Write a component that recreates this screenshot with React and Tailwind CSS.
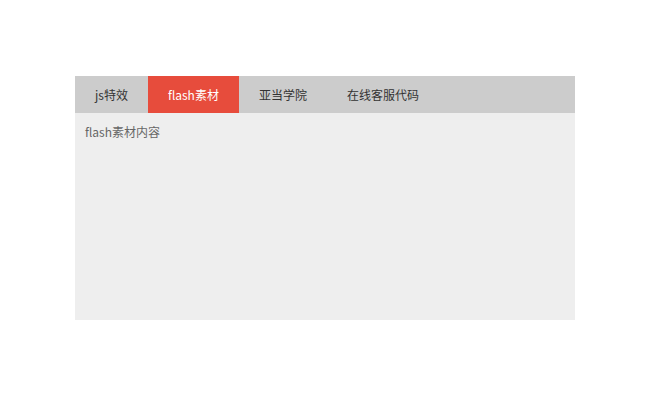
import { useState } from 'react';

const TABS = [
  { id: 'js', label: 'js特效', content: 'js特效内容' },
  { id: 'flash', label: 'flash素材', content: 'flash素材内容' },
  { id: 'adam', label: '亚当学院', content: '亚当学院内容' },
  { id: 'kefu', label: '在线客服代码', content: '在线客服代码内容' },
];

export default function App() {
  const [active, setActive] = useState('flash');
  const current = TABS.find((t) => t.id === active);

  return (
    <div
      className="w-[650px] h-[412px] bg-white pt-[76px] pl-[75px]"
      style={{ fontFamily: '"Microsoft YaHei", "Noto Sans CJK SC", sans-serif' }}
    >
      <div className="w-[500px]">
        <ul className="flex h-[37px] bg-[#cccccc]">
          {TABS.map((t) => (
            <li
              key={t.id}
              onClick={() => setActive(t.id)}
              className={
                t.id === active
                  ? 'px-5 leading-[37px] text-[12px] cursor-pointer bg-[#e74c3c] text-white'
                  : 'px-5 leading-[37px] text-[12px] cursor-pointer text-[#333333]'
              }
            >
              {t.label}
            </li>
          ))}
        </ul>
        <div className="h-[207px] bg-[#eeeeee] p-[10px] text-[12px] leading-[18px] text-[#666666]">
          {current.content}
        </div>
      </div>
    </div>
  );
}
